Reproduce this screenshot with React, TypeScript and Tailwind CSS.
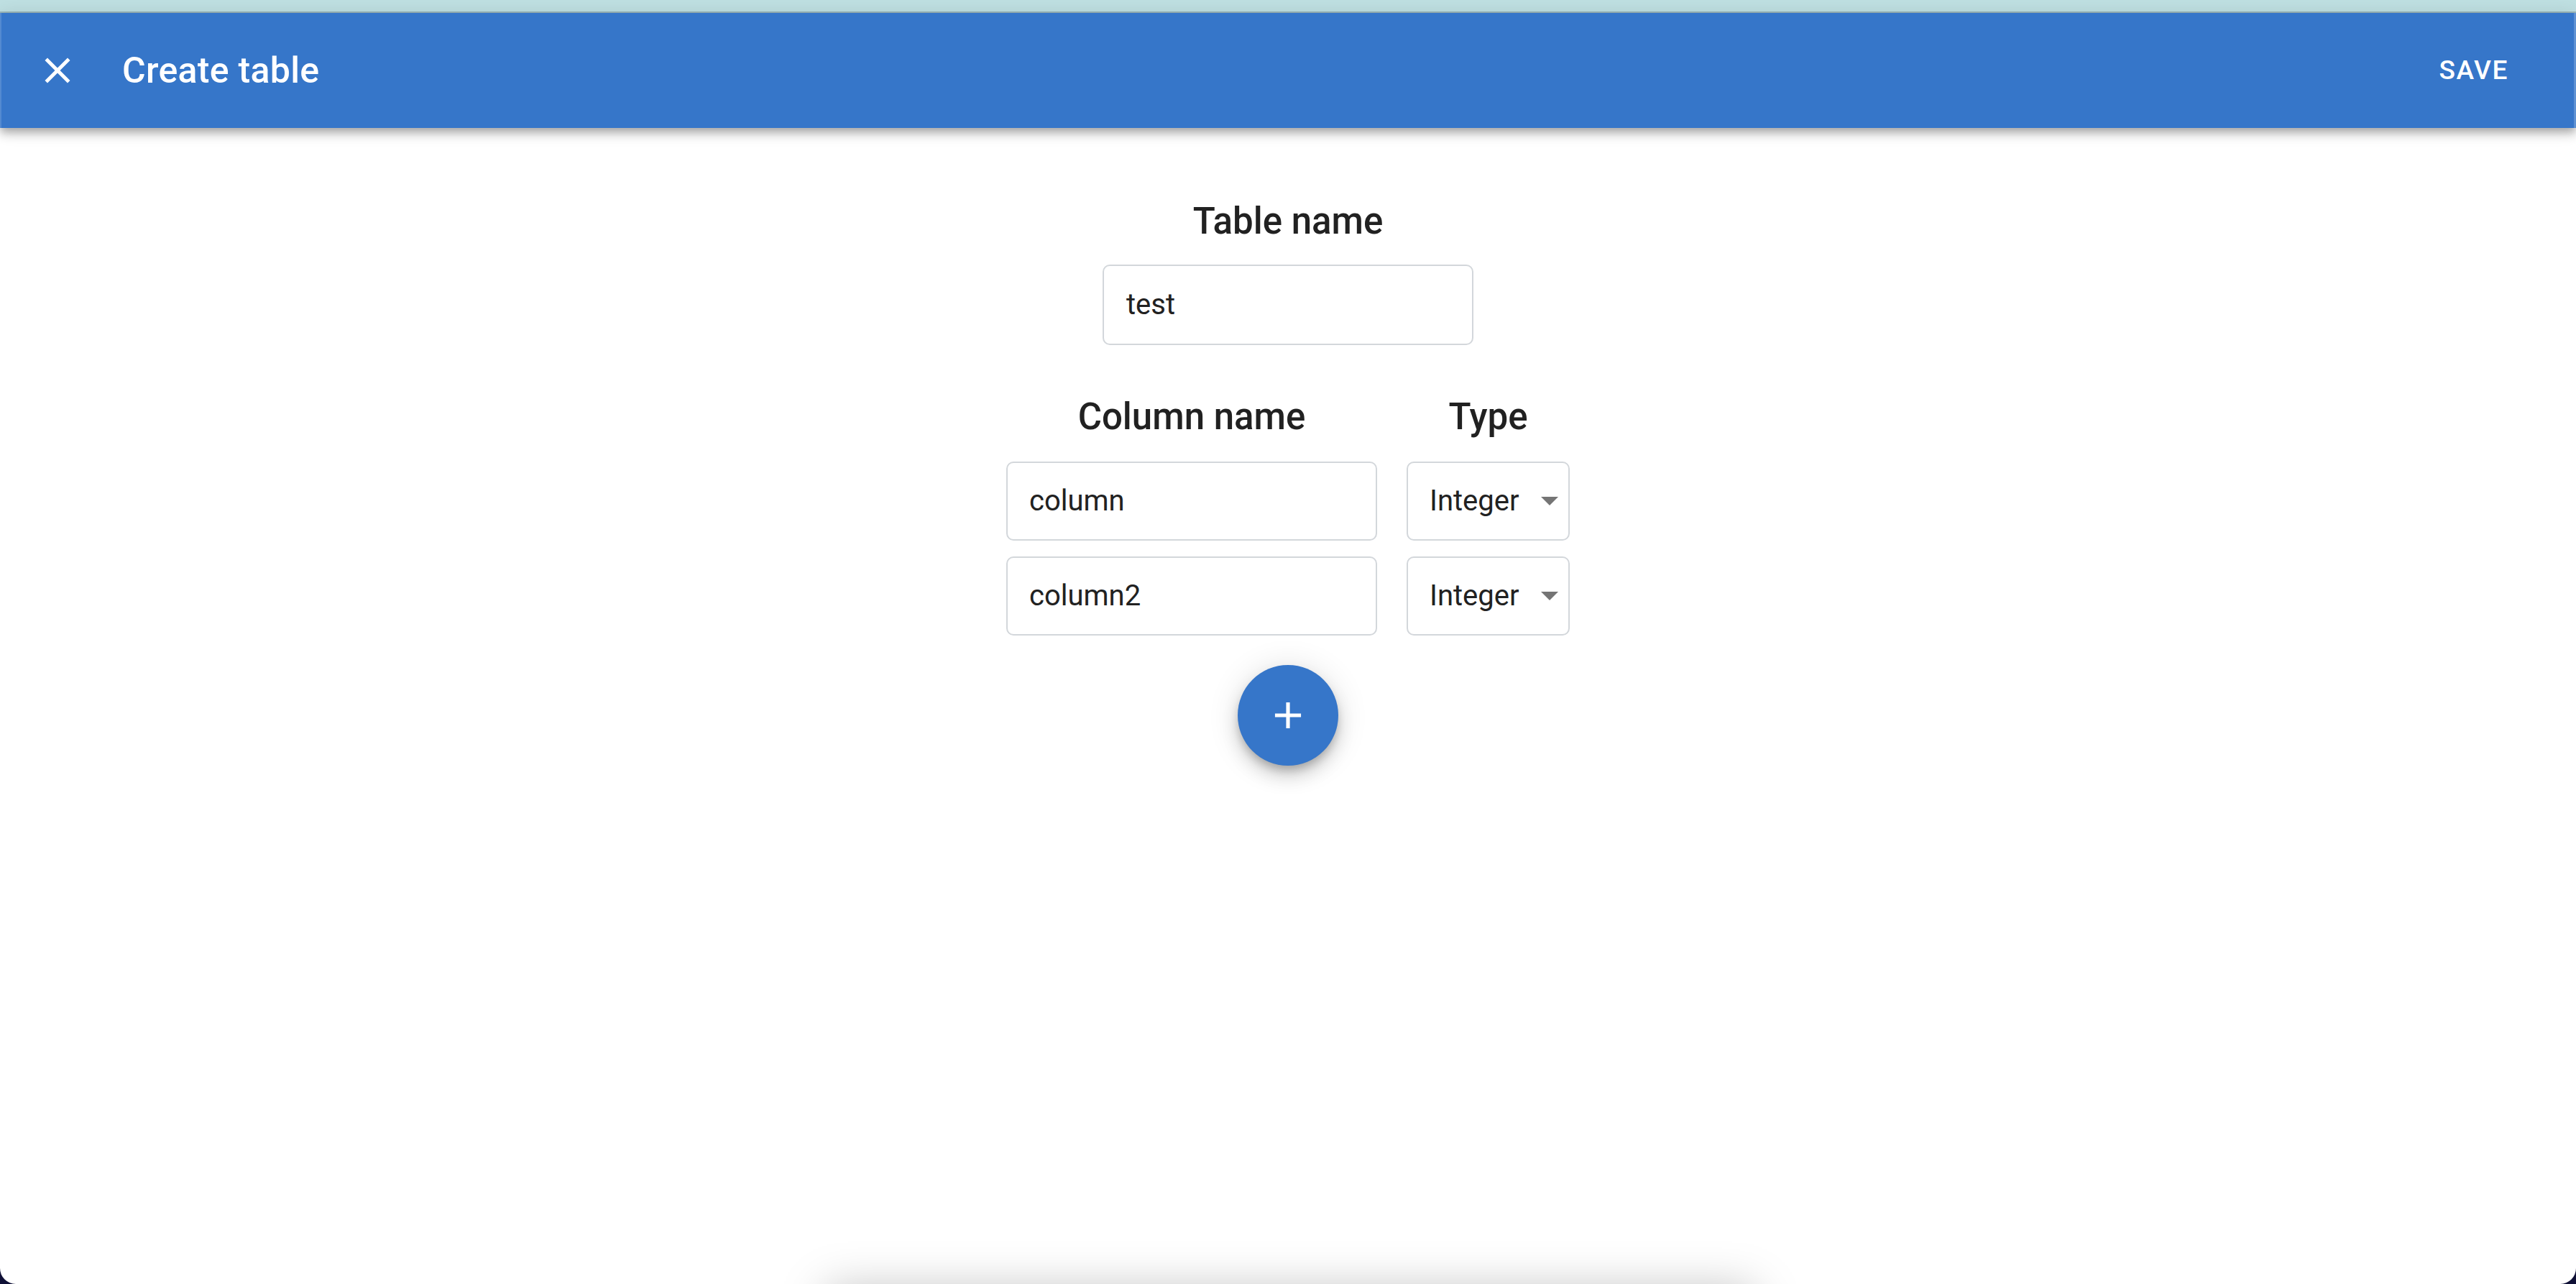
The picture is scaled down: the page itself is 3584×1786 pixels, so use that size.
import React from "react";

function CloseIcon() {
  return (
    <svg viewBox="0 0 24 24" className="w-[60px] h-[60px]" fill="#ffffff">
      <path d="M19 6.41L17.59 5 12 10.59 6.41 5 5 6.41 10.59 12 5 17.59 6.41 19 12 13.41 17.59 19 19 17.59 13.41 12z" />
    </svg>
  );
}

function AddIcon() {
  return (
    <svg viewBox="0 0 24 24" className="w-[62px] h-[62px]" fill="#ffffff">
      <path d="M19 13h-6v6h-2v-6H5v-2h6V5h2v6h6v2z" />
    </svg>
  );
}

function TextBox({ value, width }: { value: string; width: string }) {
  return (
    <div
      className={`${width} h-[110px] border-2 border-[#d3d7db] rounded-[10px] flex items-center pl-[30px] text-[40px] leading-[48px] text-[#212121]`}
    >
      {value}
    </div>
  );
}

function SelectBox({ value }: { value: string }) {
  return (
    <div className="w-[227px] h-[110px] border-2 border-[#d3d7db] rounded-[10px] flex items-center justify-between pl-[30px] pr-[14px] text-[40px] leading-[48px] text-[#212121]">
      <span>{value}</span>
      <svg viewBox="0 0 24 12" className="w-[24px] h-[12px]" fill="#757575">
        <path d="M0 0h24L12 12z" />
      </svg>
    </div>
  );
}

export default function App() {
  return (
    <div className="w-full h-[1786px] bg-[#0f1036] font-['Roboto',sans-serif]">
      <div className="relative h-full bg-white rounded-b-[22px] overflow-hidden flex flex-col">
        <div className="h-[16px] bg-[#bfe0e2] shrink-0" />
        <div className="h-[2px] bg-[#9bb7ba] shrink-0" />
        <header className="relative z-10 h-[160px] shrink-0 bg-[#3676c9] flex items-center pl-[50px] pr-[94px] shadow-[0_5px_10px_-2px_rgba(0,0,0,0.2),0_10px_12px_0_rgba(0,0,0,0.14),0_2px_25px_0_rgba(0,0,0,0.12)]">
          <CloseIcon />
          <h1 className="ml-[60px] text-[50px] leading-[60px] font-medium text-white tracking-[0.3px]">
            Create table
          </h1>
          <div className="flex-1" />
          <button className="text-[37px] leading-[44px] font-medium text-white tracking-[1.6px]">
            SAVE
          </button>
          <div className="absolute left-0 top-0 bottom-0 w-[2px] bg-white/15" />
          <div className="absolute right-0 top-0 bottom-0 w-[3px] bg-white/20" />
        </header>

        <main className="flex flex-col items-center">
          <h2 className="mt-[100px] text-[51px] leading-[60px] font-medium text-[#212121]">
            Table name
          </h2>
          <div className="mt-[30px]">
            <div className="w-[516px] h-[112px] border-2 border-[#d3d7db] rounded-[10px] flex items-center pl-[31px] text-[40px] leading-[48px] text-[#212121]">
              test
            </div>
          </div>

          <div className="mt-[70px] grid grid-cols-[516px_227px] gap-x-[41px]">
            <h2 className="text-center text-[51px] leading-[60px] font-medium text-[#212121]">
              Column name
            </h2>
            <h2 className="text-center text-[51px] leading-[60px] font-medium text-[#212121]">
              Type
            </h2>
          </div>

          <div className="mt-[32px] grid grid-cols-[516px_227px] gap-x-[41px] gap-y-[22px]">
            <TextBox value="column" width="w-[516px]" />
            <SelectBox value="Integer" />
            <TextBox value="column2" width="w-[516px]" />
            <SelectBox value="Integer" />
          </div>

          <button className="mt-[41px] w-[140px] h-[140px] rounded-full bg-[#3676c9] flex items-center justify-center shadow-[0_8px_12px_-2px_rgba(0,0,0,0.2),0_15px_25px_0_rgba(0,0,0,0.14),0_3px_45px_0_rgba(0,0,0,0.12)]">
            <AddIcon />
          </button>
        </main>

        <div className="absolute left-[1150px] w-[1290px] top-[1800px] h-[200px] bg-white shadow-[0_-6px_60px_rgba(0,0,0,0.26)]" />
      </div>
    </div>
  );
}
